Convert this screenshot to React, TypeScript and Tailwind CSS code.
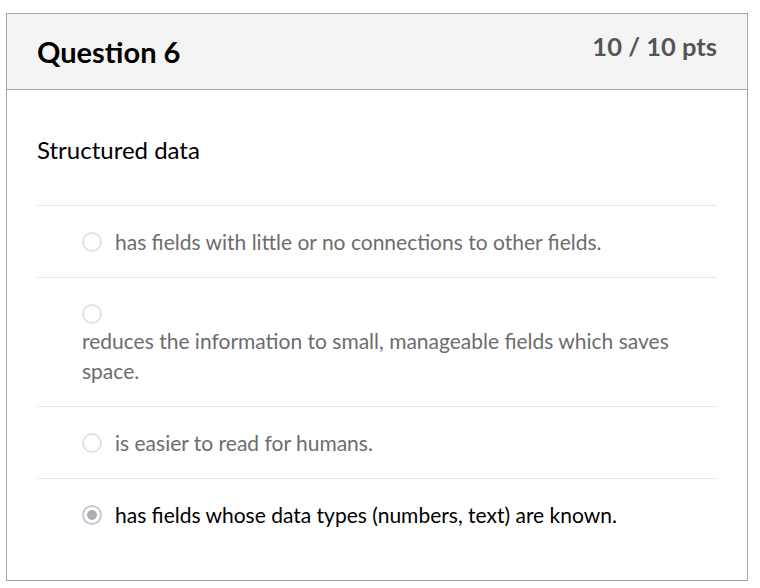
import React from 'react';

type AnswerPropsType = {
  text: string;
  selected?: boolean;
  wrap?: boolean;
};

function Radio({ selected = false }: { selected?: boolean }) {
  return (
    <span
      className={
        selected
          ? 'flex h-[20px] w-[20px] shrink-0 items-center justify-center rounded-full border-2 border-[#c7c7cf] bg-white'
          : 'flex h-[20px] w-[20px] shrink-0 items-center justify-center rounded-full border-2 border-[#e2e2e6] bg-white'
      }
    >
      {selected && <span className="h-[10px] w-[10px] rounded-full bg-[#abacb4]" />}
    </span>
  );
}

function Answer({ text, selected = false, wrap = false }: AnswerPropsType) {
  // 긴 보기는 라디오 아래로 줄바꿈
  if (wrap) {
    return (
      <div className="border-t border-[#e8e8e8] pt-[21px] pb-[20px] pl-[45px]">
        <div className="flex h-[27px] items-start pt-[5px]">
          <Radio />
        </div>
        <div className="w-[620px] text-[21px] leading-[30px] text-[#6d6d6d]">{text}</div>
      </div>
    );
  }
  return (
    <div className="flex items-center gap-[13px] border-t border-[#e8e8e8] pt-[21px] pb-[20px] pl-[45px]">
      <Radio selected={selected} />
      <span className={selected ? 'text-[21px] leading-[30px] text-black' : 'text-[21px] leading-[30px] text-[#6d6d6d]'}>
        {text}
      </span>
    </div>
  );
}

export default function App() {
  return (
    <div className="min-h-[588px] bg-white px-[6px] pt-[13px] font-['Lato','Noto_Sans',sans-serif]">
      <div className="w-[742px] border border-[#a8a8a8]">
        {/* 헤더 */}
        <div className="flex items-start justify-between border-b border-[#a8a8a8] bg-[#f4f4f4] pl-[30px] pr-[30px] pt-[17px] pb-[16px]">
          <h2 className="text-[29px] font-bold leading-[42px] text-black">Question 6</h2>
          <span className="text-[25.5px] font-bold leading-[30px] text-[#555]">10 / 10 pts</span>
        </div>
        {/* 본문 */}
        <div className="px-[30px] pt-[42px] pb-[30px]">
          <p className="text-[24px] leading-[36px] text-black">Structured data</p>
          <div className="mt-[37px]">
            <Answer text="has fields with little or no connections to other fields." />
            <Answer text="reduces the information to small, manageable fields which saves space." wrap />
            <Answer text="is easier to read for humans." />
            <Answer text="has fields whose data types (numbers, text) are known." selected />
          </div>
        </div>
      </div>
    </div>
  );
}
